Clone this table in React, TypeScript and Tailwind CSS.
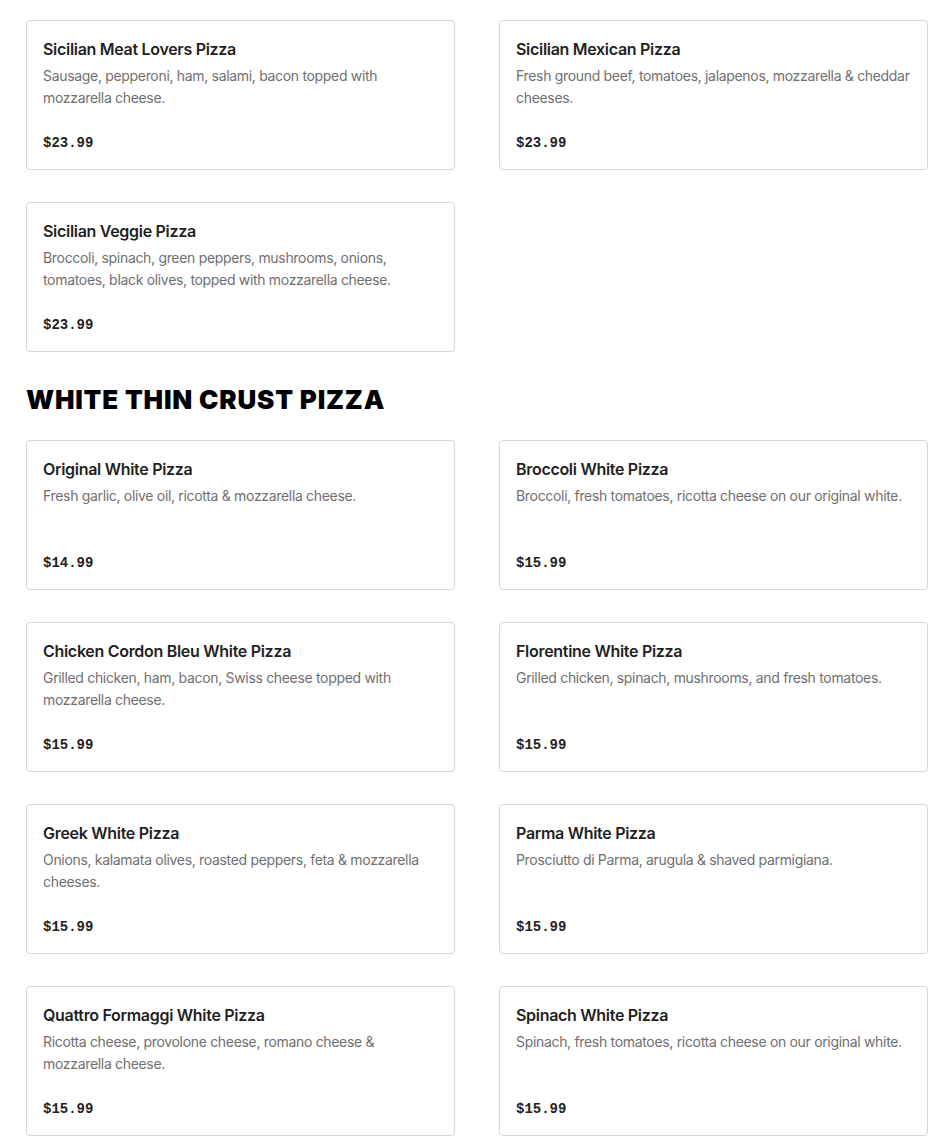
import React from "react";

type Item = { name: string; desc: string; price: string };

const sicilian: Item[] = [
  { name: "Sicilian Meat Lovers Pizza", desc: "Sausage, pepperoni, ham, salami, bacon topped with mozzarella cheese.", price: "$23.99" },
  { name: "Sicilian Mexican Pizza", desc: "Fresh ground beef, tomatoes, jalapenos, mozzarella & cheddar cheeses.", price: "$23.99" },
  { name: "Sicilian Veggie Pizza", desc: "Broccoli, spinach, green peppers, mushrooms, onions, tomatoes, black olives, topped with mozzarella cheese.", price: "$23.99" },
];

const white: Item[] = [
  { name: "Original White Pizza", desc: "Fresh garlic, olive oil, ricotta & mozzarella cheese.", price: "$14.99" },
  { name: "Broccoli White Pizza", desc: "Broccoli, fresh tomatoes, ricotta cheese on our original white.", price: "$15.99" },
  { name: "Chicken Cordon Bleu White Pizza", desc: "Grilled chicken, ham, bacon, Swiss cheese topped with mozzarella cheese.", price: "$15.99" },
  { name: "Florentine White Pizza", desc: "Grilled chicken, spinach, mushrooms, and fresh tomatoes.", price: "$15.99" },
  { name: "Greek White Pizza", desc: "Onions, kalamata olives, roasted peppers, feta & mozzarella cheeses.", price: "$15.99" },
  { name: "Parma White Pizza", desc: "Prosciutto di Parma, arugula & shaved parmigiana.", price: "$15.99" },
  { name: "Quattro Formaggi White Pizza", desc: "Ricotta cheese, provolone cheese, romano cheese & mozzarella cheese.", price: "$15.99" },
  { name: "Spinach White Pizza", desc: "Spinach, fresh tomatoes, ricotta cheese on our original white.", price: "$15.99" },
];

function Card({ item }: { item: Item }) {
  return (
    <div className="border border-[#d6d6d6] rounded-[4px] bg-white px-4 pt-4 pb-4 flex flex-col">
      <div className="text-[16px] leading-[24px] font-semibold tracking-[-0.3px] text-[#1f1f1f] font-['Inter',sans-serif]">{item.name}</div>
      <div className="mt-[4px] min-h-[44px] text-[14px] leading-[22px] tracking-[-0.32px] text-[#707070] font-['Inter',sans-serif]">{item.desc}</div>
      <div className="mt-[24px] text-[14px] leading-[20px] font-bold text-[#1f1f1f] font-['Liberation_Mono',monospace]">{item.price}</div>
    </div>
  );
}

export default function App() {
  return (
    <div className="bg-white min-h-[1136px] pl-[26px] pt-[20px]">
      <div className="grid grid-cols-[429px_429px] gap-x-[44px] gap-y-[32px]">
        {sicilian.map((it) => (
          <Card key={it.name} item={it} />
        ))}
      </div>
      <h2 className="mt-[32px] mb-[24px] text-[26px] leading-[32px] font-black tracking-[0.8px] text-black font-['Inter',sans-serif]">
        WHITE THIN CRUST PIZZA
      </h2>
      <div className="grid grid-cols-[429px_429px] gap-x-[44px] gap-y-[32px]">
        {white.map((it) => (
          <Card key={it.name} item={it} />
        ))}
      </div>
    </div>
  );
}
